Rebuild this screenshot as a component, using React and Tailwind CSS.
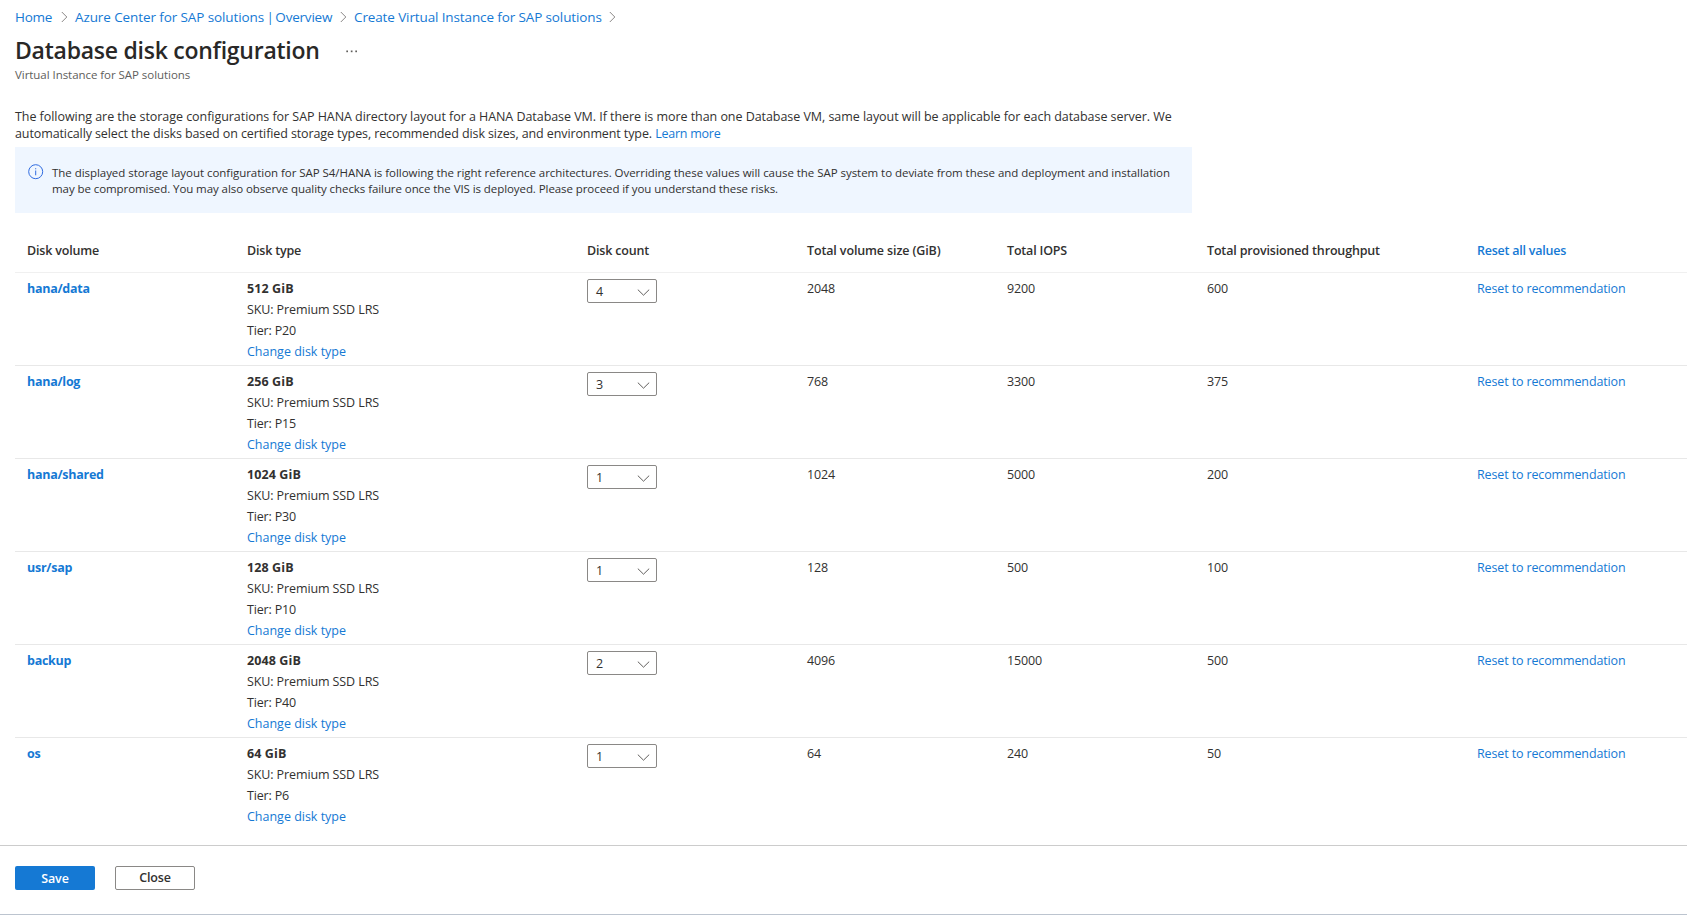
const disks = [
  { volume: "hana/data", size: "512 GiB", tier: "P20", count: 4, total: 2048, iops: 9200, throughput: 600 },
  { volume: "hana/log", size: "256 GiB", tier: "P15", count: 3, total: 768, iops: 3300, throughput: 375 },
  { volume: "hana/shared", size: "1024 GiB", tier: "P30", count: 1, total: 1024, iops: 5000, throughput: 200 },
  { volume: "usr/sap", size: "128 GiB", tier: "P10", count: 1, total: 128, iops: 500, throughput: 100 },
  { volume: "backup", size: "2048 GiB", tier: "P40", count: 2, total: 4096, iops: 15000, throughput: 500 },
  { volume: "os", size: "64 GiB", tier: "P6", count: 1, total: 64, iops: 240, throughput: 50 },
];

const columns = "grid grid-cols-[220px_340px_220px_200px_200px_270px_1fr] pl-3";

function Separator() {
  return (
    <svg className="h-3 w-[7px] shrink-0" viewBox="0 0 7 12" fill="none" stroke="#8a8886" strokeWidth="1">
      <path d="M0.8 1 L5.8 6 L0.8 11" />
    </svg>
  );
}

function Breadcrumb() {
  return (
    <nav className="flex h-[18px] items-center text-[13.5px] leading-[18px] text-[#1579d4]">
      <a className="w-[46px] tracking-[-0.289px]">Home</a>
      <Separator />
      <a className="ml-[7px] w-[265px] tracking-[-0.1px]">
        Azure Center for SAP solutions<span className="tracking-[-1.07px]"> | </span>
        <span className="tracking-[-0.2px]">Overview</span>
      </a>
      <Separator />
      <a className="ml-[7px] w-[255px] tracking-[-0.12px]">Create Virtual Instance for SAP solutions</a>
      <Separator />
    </nav>
  );
}

function CountSelect({ value }) {
  return (
    <button className="mt-[6px] flex h-6 w-[70px] items-center justify-between rounded-[2px] border border-[#8a8886] bg-white pr-[6.5px] pl-2 text-[12.5px] leading-[22px] text-[#323130]">
      <span className="pt-0.5">{value}</span>
      <svg className="mt-0.5 h-[7px] w-[13px]" viewBox="0 0 13 7" fill="none" stroke="#605e5c" strokeWidth="1">
        <path d="M0.8 0.6 L6.5 6.2 L12.2 0.6" />
      </svg>
    </button>
  );
}

function DiskRow({ disk, last }) {
  return (
    <div className={`${columns} h-[93px] leading-[21px] ${last ? "" : "border-b border-[#e8e8e8]"}`}>
      <a className="pt-[5px] font-bold tracking-[-0.27px] text-[#1579d4]">{disk.volume}</a>
      <div className="pt-[5px]">
        <div className="font-bold tracking-[0.1px]">{disk.size}</div>
        <div className="tracking-[-0.107px]">SKU: Premium SSD LRS</div>
        <div className="tracking-[-0.168px]">Tier: {disk.tier}</div>
        <a className="block tracking-[-0.011px] text-[#1579d4]">Change disk type</a>
      </div>
      <div>
        <CountSelect value={disk.count} />
      </div>
      <div className="pt-[5px] tracking-[-0.148px]">{disk.total}</div>
      <div className="pt-[5px] tracking-[-0.148px]">{disk.iops}</div>
      <div className="pt-[5px] tracking-[-0.148px]">{disk.throughput}</div>
      <a className="pt-[5px] tracking-[-0.13px] text-[#1579d4]">Reset to recommendation</a>
    </div>
  );
}

export default function App() {
  return (
    <div className="flex h-[915px] w-[1687px] flex-col overflow-hidden border-b border-[#bcc4cf] bg-white font-['Open_Sans','Noto_Sans',sans-serif] text-[12.5px] whitespace-nowrap text-[#323130]">
      <main className="flex h-[845px] flex-col pt-2 pl-[15px]">
        <Breadcrumb />
        <div className="mt-2 flex h-8 items-center">
          <h1 className="w-[331px] text-[23px] leading-8 font-semibold tracking-[-0.25px] text-[#292827]">
            Database disk configuration
          </h1>
          <svg className="mt-[3px] h-[3px] w-3" viewBox="0 0 12 3" fill="#605e5c">
            <rect x="0.3" y="0.5" width="1.7" height="1.7" />
            <rect x="4.8" y="0.5" width="1.7" height="1.7" />
            <rect x="9.3" y="0.5" width="1.7" height="1.7" />
          </svg>
        </div>
        <div className="text-[11.5px] leading-[17px] tracking-[-0.05px] text-[#605e5c]">
          Virtual Instance for SAP solutions
        </div>
        <p className="mt-[25px] leading-[17px]">
          <span className="block tracking-[-0.05px]">
            The following are the storage configurations for SAP HANA directory layout for a HANA Database VM. If there is more than one Database VM, same layout will be applicable for each database server. We
          </span>
          <span className="tracking-[-0.105px]">
            automatically select the disks based on certified storage types, recommended disk sizes, and environment type.{" "}
          </span>
          <a className="tracking-[-0.24px] text-[#1579d4]">Learn more</a>
        </p>
        <div className="mt-[5px] flex h-[66px] w-[1177px] shrink-0 bg-[#eff6ff] pt-[17px] pl-[13px] text-[11.5px] leading-4">
          <svg className="h-4 w-4 shrink-0" viewBox="0 0 16 16" fill="none" stroke="#2f6be0" strokeWidth="1">
            <circle cx="7.7" cy="7.7" r="7" />
            <path d="M7.7 6.5 V11.3" />
            <path d="M7.7 4.2 V5.3" />
          </svg>
          <p className="ml-2 pt-px">
            <span className="block tracking-[-0.043px]">
              The displayed storage layout configuration for SAP S4/HANA is following the right reference architectures. Overriding these values will cause the SAP system to deviate from these and deployment and installation
            </span>
            <span className="block tracking-[-0.075px]">
              may be compromised. You may also observe quality checks failure once the VIS is deployed. Please proceed if you understand these risks.
            </span>
          </p>
        </div>
        <div className={`${columns} h-[60px] shrink-0 border-b border-[#f0f0f0] pt-[29px] leading-[18px] font-semibold`}>
          <div className="tracking-[-0.182px]">Disk volume</div>
          <div className="tracking-[-0.196px]">Disk type</div>
          <div className="tracking-[-0.181px]">Disk count</div>
          <div className="tracking-[-0.128px]">Total volume size (GiB)</div>
          <div className="tracking-[-0.184px]">Total IOPS</div>
          <div className="tracking-[-0.16px]">Total provisioned throughput</div>
          <a className="tracking-[-0.236px] text-[#1579d4]">Reset all values</a>
        </div>
        {disks.map((disk, i) => (
          <DiskRow key={disk.volume} disk={disk} last={i === disks.length - 1} />
        ))}
      </main>
      <footer className="flex h-[69px] gap-5 border-t border-[#cccccc] pt-5 pl-[15px] text-[12.5px] font-semibold">
        <button className="h-6 w-20 rounded-[2px] bg-[#1579d4] pt-px leading-[22px] tracking-[-0.129px] text-white">Save</button>
        <button className="h-6 w-20 rounded-[2px] border border-[#8a8886] bg-white leading-[22px] tracking-[-0.166px]">Close</button>
      </footer>
    </div>
  );
}
